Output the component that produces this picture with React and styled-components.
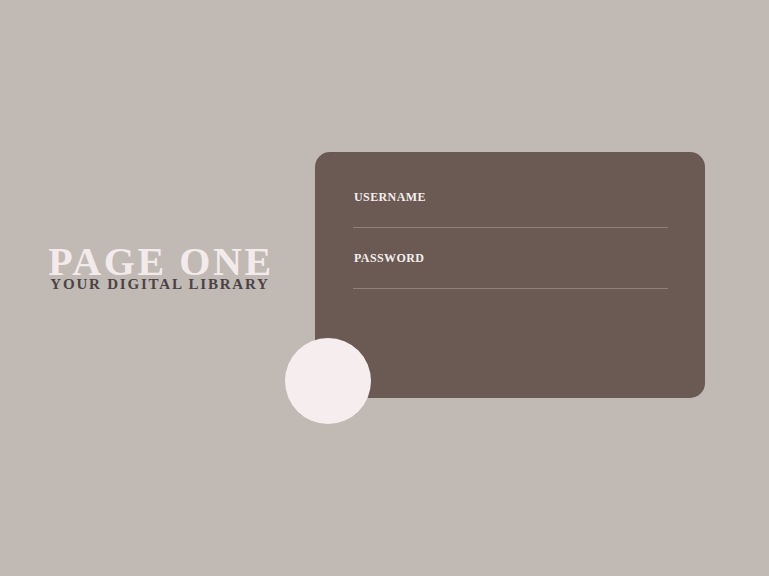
import React from "react";
import styled, { createGlobalStyle } from "styled-components";

const GlobalStyle = createGlobalStyle`
  body {
    margin: 0;
    background-color: #c1b9b4;
    font-family: "Liberation Serif", "Times New Roman", serif;
  }
`;

const Page = styled.div`
  min-height: 100vh;
  display: flex;
  align-items: flex-start;
  padding: 152px 0 0 46px;
  box-sizing: border-box;
`;

const Brand = styled.div`
  display: flex;
  flex-direction: column;
  align-items: center;
  margin-top: 94px;
  width: 230px;
`;

const Title = styled.h1`
  margin: 0;
  font-size: 40px;
  line-height: 32px;
  letter-spacing: 2.6px;
  font-weight: bold;
  color: #f3ebeb;
  white-space: nowrap;
`;

const Subtitle = styled.h2`
  margin: 0 2px 0 0;
  font-size: 15px;
  line-height: 12px;
  font-weight: bold;
  letter-spacing: 1.8px;
  color: #4a4446;
  white-space: nowrap;
`;

const Card = styled.form`
  position: relative;
  margin-left: 39px;
  width: 390px;
  height: 246px;
  box-sizing: border-box;
  padding: 38px 37px 0 38px;
  background-color: #6a5a53;
  border-radius: 15px;
  display: flex;
  flex-direction: column;
  gap: 23px;
`;

const Field = styled.label`
  display: flex;
  flex-direction: column;
`;

const Label = styled.span`
  padding-left: 1px;
  font-size: 12px;
  line-height: 14px;
  letter-spacing: 0.4px;
  font-weight: bold;
  color: #f5eeee;
`;

const Input = styled.input`
  box-sizing: border-box;
  height: 24px;
  border: none;
  border-bottom: 1px solid #8f807a;
  background: transparent;
  outline: none;
  padding: 0;
  color: #f5eeee;
  font-family: inherit;
`;

const Circle = styled.div`
  position: absolute;
  left: -30px;
  top: 186px;
  width: 86px;
  height: 86px;
  border-radius: 50%;
  background-color: #f5edee;
`;

const App = () => {
  return (
    <>
      <GlobalStyle />
      <Page>
        <Brand>
          <Title>PAGE ONE</Title>
          <Subtitle>YOUR DIGITAL LIBRARY</Subtitle>
        </Brand>
        <Card onSubmit={(e) => e.preventDefault()}>
          <Field>
            <Label>USERNAME</Label>
            <Input type="text" />
          </Field>
          <Field>
            <Label>PASSWORD</Label>
            <Input type="password" />
          </Field>
          <Circle />
        </Card>
      </Page>
    </>
  );
};

export default App;
